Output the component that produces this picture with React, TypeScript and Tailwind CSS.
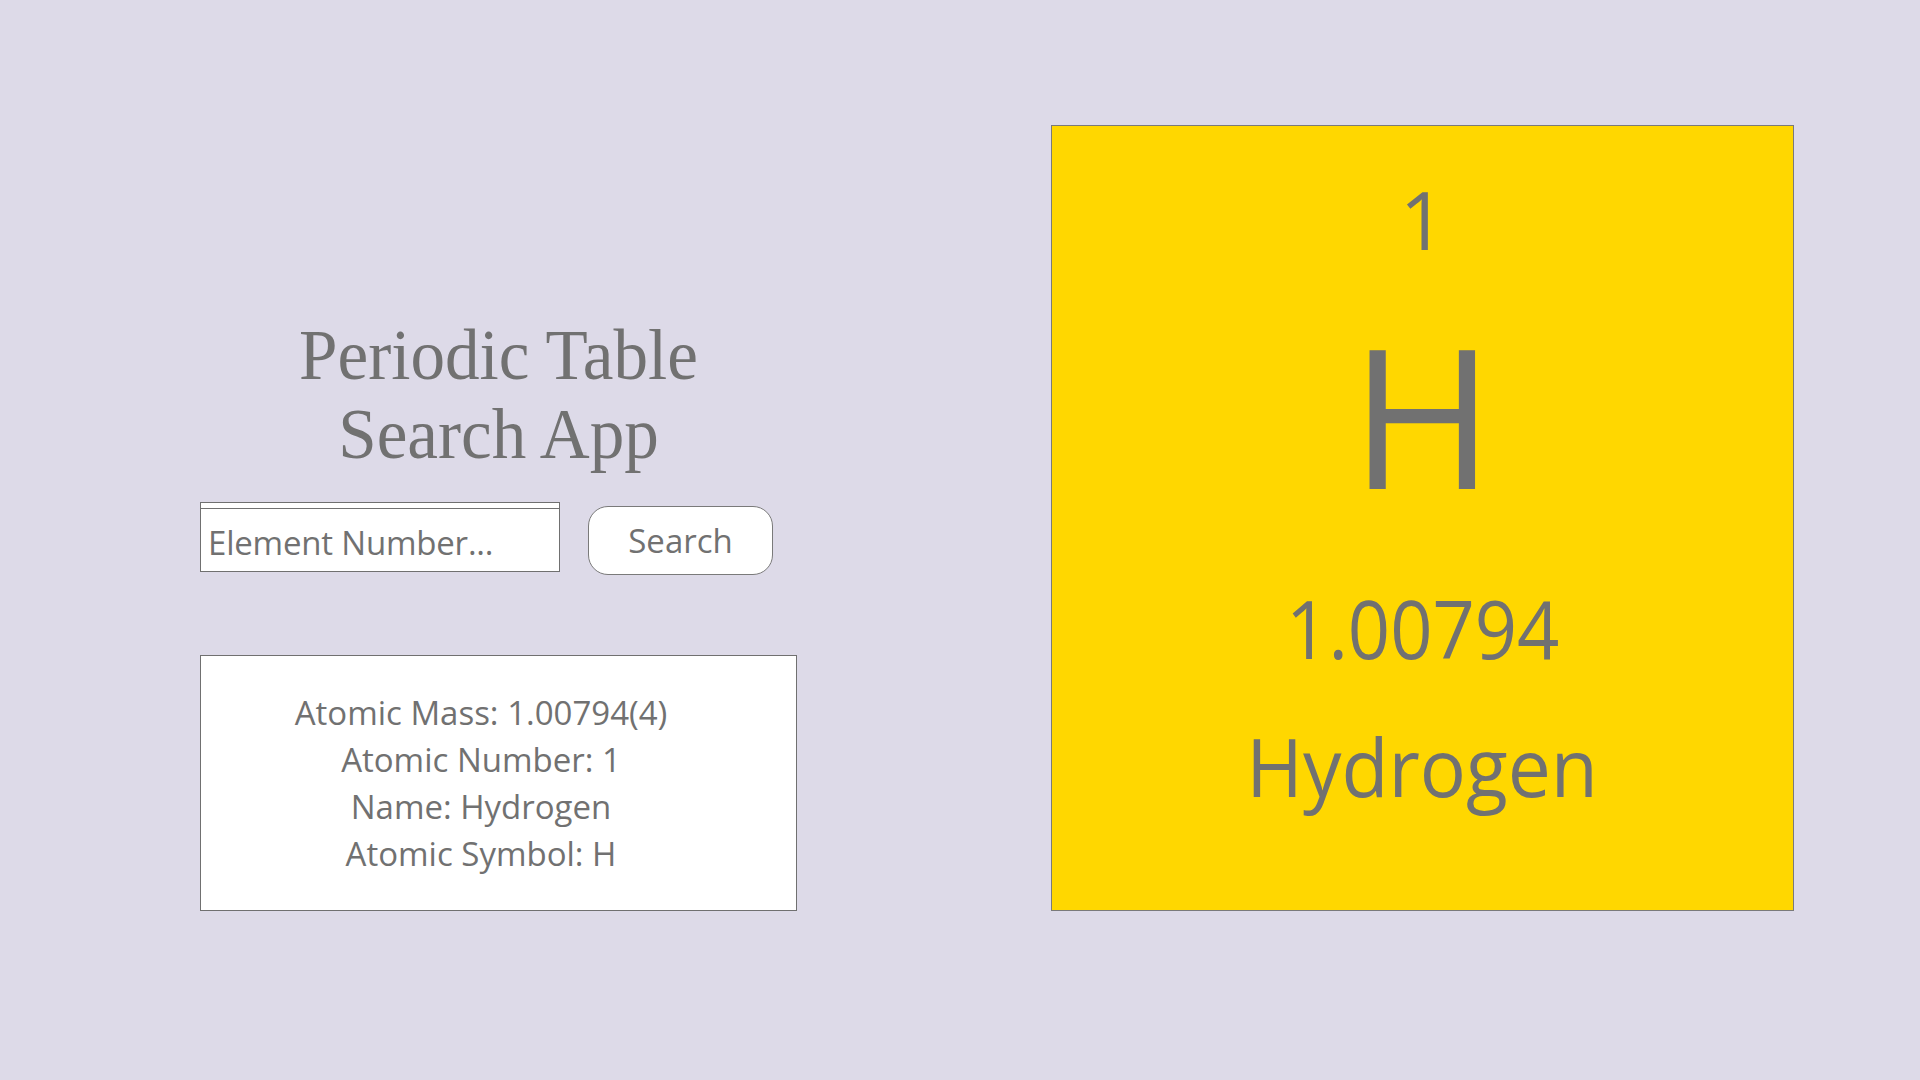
import React from 'react';

const element = {
  number: 1,
  symbol: 'H',
  name: 'Hydrogen',
  mass: '1.00794',
  massFull: '1.00794(4)',
};

export default function App() {
  return (
    <div className="flex h-[1080px] w-full bg-[#dddae8] font-['Open_Sans',sans-serif] text-[#717171]">
      {/* Left column: title, search, details */}
      <div className="ml-[200px] flex w-[597px] shrink-0 flex-col pt-[316px]">
        <h1 className="text-center font-['Liberation_Serif',serif] text-[72px] font-normal leading-[79px]">
          <span className="block scale-x-[0.96]">Periodic Table</span>
          <span className="block scale-x-[0.96]">Search App</span>
        </h1>

        <div className="mt-[28px] flex items-start">
          <div className="flex h-[70px] w-[360px] flex-col border border-[#707070] bg-white">
            <div className="h-[6px] shrink-0 border-b border-[#707070]" />
            <input
              type="text"
              placeholder="Element Number..."
              className="h-full w-full bg-transparent pl-[7px] pt-[4px] text-[33px] tracking-[-0.2px] text-[#717171] outline-none placeholder:text-[#717171]"
            />
          </div>
          <button className="ml-[28px] mt-[4px] flex h-[69px] w-[185px] items-center justify-center rounded-[20px] border border-[#7a7a7a] bg-white text-[33px] text-[#717171]">
            Search
          </button>
        </div>

        <div className="mt-[80px] flex h-[256px] flex-col justify-center border border-[#707070] bg-white pr-[35px] text-center text-[33px] leading-[47px]">
          <p>Atomic Mass: {element.massFull}</p>
          <p>Atomic Number: {element.number}</p>
          <p>Name: {element.name}</p>
          <p>Atomic Symbol: {element.symbol}</p>
        </div>
      </div>

      {/* Element tile */}
      <div className="ml-[254px] mt-[125px] flex h-[786px] w-[743px] shrink-0 flex-col items-center border border-[#7a7a7a] bg-[#ffd700] pt-[53px] text-center">
        <span className="block text-[80px] leading-none">{element.number}</span>
        <span className="mt-[57px] block text-[195px] leading-none">{element.symbol}</span>
        <span className="mt-[77px] block scale-x-[0.925] text-[80px] leading-none">{element.mass}</span>
        <span className="mt-[58px] block scale-x-[0.96] text-[80px] leading-none">{element.name}</span>
      </div>
    </div>
  );
}
